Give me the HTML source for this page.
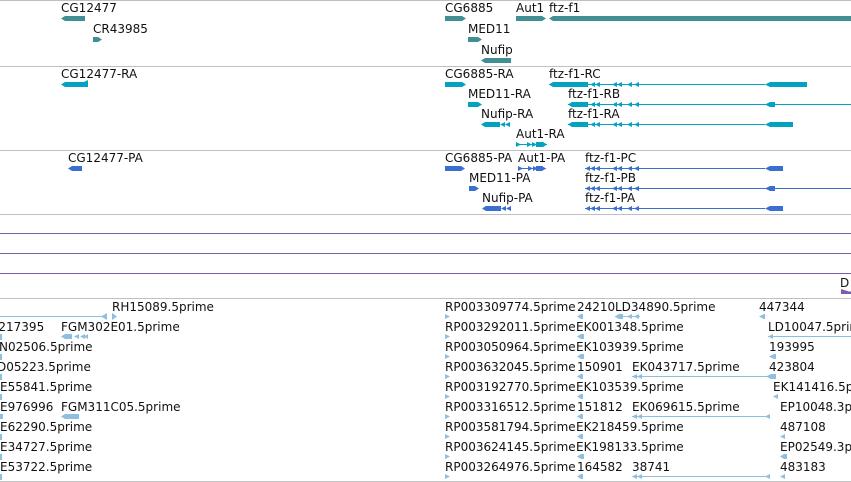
<!DOCTYPE html>
<html><head><meta charset="utf-8"><style>
html,body{margin:0;padding:0;background:#fff;}
body{width:851px;height:482px;position:relative;overflow:hidden;font-family:"DejaVu Sans","Liberation Sans",sans-serif;font-size:12px;color:#111;}
.t{position:absolute;line-height:14px;white-space:nowrap;}
svg{position:absolute;left:0;top:0;}
</style></head><body>
<svg width="851" height="482" xmlns="http://www.w3.org/2000/svg">
<g stroke="#c0c0c0" stroke-width="1">
<line x1="0" y1="0.5" x2="851" y2="0.5"/><line x1="0" y1="66.5" x2="851" y2="66.5"/>
<line x1="0" y1="150.5" x2="851" y2="150.5"/><line x1="0" y1="214.5" x2="851" y2="214.5"/>
<line x1="0" y1="298.5" x2="851" y2="298.5"/><line x1="0" y1="481.5" x2="851" y2="481.5"/>
</g>
<g stroke="#7a5fae" stroke-width="1">
<line x1="0" y1="233.5" x2="851" y2="233.5"/><line x1="0" y1="253.5" x2="851" y2="253.5"/><line x1="0" y1="273.5" x2="851" y2="273.5"/>
</g>
<polygon points="841,289 849,291.5 851,291.5 851,294 841,294" fill="#7a5fae"/>
<!-- genes -->
<g fill="#418f94">
<polygon points="61,18.5 65,16 85,16 85,21 65,21"/>
<polygon points="93,37 98,37 102,39.5 98,42 93,42"/>
<polygon points="445,16 462,16 466,18.5 462,21 445,21"/>
<polygon points="516,16 542,16 546,18.5 542,21 516,21"/>
<polygon points="549,18.5 553,16 851,16 851,21 553,21"/>
<polygon points="468,37 478,37 482,39.5 478,42 468,42"/>
<polygon points="481,60.5 485,58 511,58 511,63 485,63"/>
</g>
<!-- transcripts -->
<g fill="#02a2c1" stroke="#02a2c1">
<polygon stroke="none" points="61,84.5 65,82 84,82 88,80 88,87 84,87 65,87"/>
<polygon stroke="none" points="445,82 462,82 466,84.5 462,87 445,87"/>
<line x1="549" y1="84.5" x2="765" y2="84.5"/>
<polygon stroke="none" points="549,84.5 553,82 588,82 588,87 553,87"/>
<polygon stroke="none" points="765,84.5 770,82 807,82 807,87 770,87"/>
<line x1="568" y1="104.5" x2="851" y2="104.5"/>
<polygon stroke="none" points="568,104.5 572,102 588,102 588,107 572,107"/>
<polygon stroke="none" points="765,104.5 770,102 775,102 775,107 770,107"/>
<line x1="568" y1="124.5" x2="765" y2="124.5"/>
<polygon stroke="none" points="568,124.5 572,122 588,122 588,127 572,127"/>
<polygon stroke="none" points="765,124.5 770,122 793,122 793,127 770,127"/>
<polygon stroke="none" points="468,102 478,102 482,104.5 478,107 468,107"/>
<polygon stroke="none" points="481,124.5 485,122 500,122 500,127 485,127"/>
<line x1="516" y1="144.5" x2="547" y2="144.5"/>
<polygon stroke="none" points="516,142 521,144.5 516,147"/>
<polygon stroke="none" points="527,142 532,144.5 527,147"/>
<polygon stroke="none" points="532,142 537,144.5 532,147"/>
<polygon stroke="none" points="536,142 543,142 547,144.5 543,147 536,147"/>
</g>
<g fill="#02a2c1">
<polygon points="590,84.5 595,82 595,87"/><polygon points="595,84.5 600,82 600,87"/><polygon points="612,84.5 617,82 617,87"/><polygon points="617,84.5 622,82 622,87"/><polygon points="627,84.5 632,82 632,87"/><polygon points="634,84.5 639,82 639,87"/>
<polygon points="590,104.5 595,102 595,107"/><polygon points="595,104.5 600,102 600,107"/><polygon points="612,104.5 617,102 617,107"/><polygon points="617,104.5 622,102 622,107"/><polygon points="627,104.5 632,102 632,107"/><polygon points="634,104.5 639,102 639,107"/>
<polygon points="590,124.5 595,122 595,127"/><polygon points="595,124.5 600,122 600,127"/><polygon points="612,124.5 617,122 617,127"/><polygon points="617,124.5 622,122 622,127"/><polygon points="627,124.5 632,122 632,127"/><polygon points="634,124.5 639,122 639,127"/>
<polygon points="500,124.5 505,122 505,127"/><polygon points="505,124.5 510,122 510,127"/>
</g>
<!-- proteins -->
<g fill="#3a6fd0" stroke="#3a6fd0">
<polygon stroke="none" points="68,168.5 72,166 82,166 82,171 72,171"/>
<polygon stroke="none" points="445,166 461,166 465,168.5 461,171 445,171"/>
<line x1="518" y1="168.5" x2="546" y2="168.5"/>
<polygon stroke="none" points="518,166 523,168.5 518,171"/><polygon stroke="none" points="528,166 533,168.5 528,171"/><polygon stroke="none" points="533,166 538,168.5 533,171"/><polygon stroke="none" points="536,166 542,166 546,168.5 542,171 536,171"/>
<line x1="585" y1="168.5" x2="765" y2="168.5"/>
<polygon stroke="none" points="765,168.5 770,166 783,166 783,171 770,171"/>
<line x1="585" y1="188.5" x2="851" y2="188.5"/>
<polygon stroke="none" points="765,188.5 770,186 775,186 775,191 770,191"/>
<line x1="585" y1="208.5" x2="765" y2="208.5"/>
<polygon stroke="none" points="765,208.5 770,206 783,206 783,211 770,211"/>
<polygon stroke="none" points="469,186 475,186 479,188.5 475,191 469,191"/>
<polygon stroke="none" points="482,208.5 486,206 501,206 501,211 486,211"/>
</g>
<g fill="#3a6fd0">
<polygon points="585,168.5 590,166 590,171"/><polygon points="590,168.5 595,166 595,171"/><polygon points="595,168.5 600,166 600,171"/><polygon points="612,168.5 617,166 617,171"/><polygon points="617,168.5 622,166 622,171"/><polygon points="627,168.5 632,166 632,171"/><polygon points="634,168.5 639,166 639,171"/>
<polygon points="585,188.5 590,186 590,191"/><polygon points="590,188.5 595,186 595,191"/><polygon points="595,188.5 600,186 600,191"/><polygon points="612,188.5 617,186 617,191"/><polygon points="617,188.5 622,186 622,191"/><polygon points="627,188.5 632,186 632,191"/><polygon points="634,188.5 639,186 639,191"/>
<polygon points="585,208.5 590,206 590,211"/><polygon points="590,208.5 595,206 595,211"/><polygon points="595,208.5 600,206 600,211"/><polygon points="612,208.5 617,206 617,211"/><polygon points="617,208.5 622,206 622,211"/><polygon points="627,208.5 632,206 632,211"/><polygon points="634,208.5 639,206 639,211"/>
<polygon points="501,208.5 506,206 506,211"/><polygon points="506,208.5 511,206 511,211"/>
</g>
<!-- bottom ESTs -->
<g fill="#8dbfe0" stroke="#8dbfe0">
<line x1="0" y1="316.5" x2="105" y2="316.5"/>
<polygon stroke="none" points="101,316.5 107,313 107,320"/>
<polygon stroke="none" points="112,313 117,316.5 112,320"/>
<polygon stroke="none" points="61,336.5 65,334 72,334 72,339 65,339"/><polygon stroke="none" points="74,336.5 79,334 79,339"/><polygon stroke="none" points="80,336.5 85,334 85,339"/><polygon stroke="none" points="84,336.5 88,334 88,339"/>
<polygon stroke="none" points="61,416.5 65,414 79,414 79,419 65,419"/>
<rect stroke="none" x="0" y="334" width="2" height="6"/><rect stroke="none" x="0" y="354" width="2" height="6"/><rect stroke="none" x="0" y="374" width="2" height="6"/><rect stroke="none" x="0" y="394" width="2" height="6"/><rect stroke="none" x="0" y="414" width="3" height="5"/><rect stroke="none" x="0" y="434" width="2" height="6"/><rect stroke="none" x="0" y="454" width="2" height="6"/><rect stroke="none" x="0" y="474" width="2" height="6"/>
</g>
<g fill="#8dbfe0" stroke="#8dbfe0">
<polygon stroke="none" points="445,314 450,316.5 445,319"/><polygon stroke="none" points="445,334 450,336.5 445,339"/><polygon stroke="none" points="445,354 450,356.5 445,359"/><polygon stroke="none" points="445,374 450,376.5 445,379"/><polygon stroke="none" points="445,394 450,396.5 445,399"/><polygon stroke="none" points="445,414 450,416.5 445,419"/><polygon stroke="none" points="445,434 450,436.5 445,439"/><polygon stroke="none" points="445,454 450,456.5 445,459"/><polygon stroke="none" points="445,474 450,476.5 445,479"/>
<polygon stroke="none" points="577,316.5 581,314 583,314 583,319 581,319"/><polygon stroke="none" points="577,336.5 581,334 584,334 584,339 581,339"/><polygon stroke="none" points="577,356.5 581,354 584,354 584,359 581,359"/><polygon stroke="none" points="577,376.5 581,374 583,374 583,379 581,379"/><polygon stroke="none" points="577,396.5 581,394 583,394 583,399 581,399"/><polygon stroke="none" points="577,416.5 581,414 583,414 583,419 581,419"/><polygon stroke="none" points="577,436.5 581,434 583,434 583,439 581,439"/><polygon stroke="none" points="577,456.5 581,454 584,454 584,459 581,459"/><polygon stroke="none" points="577,476.5 581,474 583,474 583,479 581,479"/>
<line x1="615" y1="316.5" x2="640" y2="316.5"/>
<polygon stroke="none" points="615,316.5 619,314 623,314 623,319 619,319"/><polygon stroke="none" points="627,316.5 632,314 632,319"/><polygon stroke="none" points="634,316.5 639,314 639,319"/>
<polygon stroke="none" points="759,316.5 764,314 765,314 765,319 764,319"/>
<line x1="768" y1="336.5" x2="851" y2="336.5"/><polygon stroke="none" points="768,336.5 773,334 773,339"/>
<polygon stroke="none" points="769,356.5 774,354 776,354 776,359 774,359"/>
<line x1="632" y1="376.5" x2="770" y2="376.5"/>
<polygon stroke="none" points="632,376.5 637,374 637,379"/><polygon stroke="none" points="637,376.5 642,374 642,379"/><polygon stroke="none" points="766,376.5 771,374 776,374 776,379 771,379"/>
<polygon stroke="none" points="773,396.5 778,394 778,399"/>
<line x1="632" y1="416.5" x2="770" y2="416.5"/>
<polygon stroke="none" points="632,416.5 637,414 637,419"/><polygon stroke="none" points="637,416.5 642,414 642,419"/><polygon stroke="none" points="765,416.5 770,414 770,419"/>
<polygon stroke="none" points="780,436.5 785,434 785,439"/>
<polygon stroke="none" points="780,456.5 784,454 787,454 787,459 784,459"/>
<line x1="632" y1="476.5" x2="770" y2="476.5"/>
<polygon stroke="none" points="632,476.5 637,474 637,479"/><polygon stroke="none" points="637,476.5 642,474 642,479"/><polygon stroke="none" points="765,476.5 770,474 770,479"/>
<polygon stroke="none" points="780,476.5 785,474 785,479"/>
</g>
</svg>

<div class="t" style="left:61px;top:1px">CG12477</div>
<div class="t" style="left:93px;top:22px">CR43985</div>
<div class="t" style="left:445px;top:1px">CG6885</div>
<div class="t" style="left:516px;top:1px">Aut1</div>
<div class="t" style="left:549px;top:1px">ftz-f1</div>
<div class="t" style="left:468px;top:22px">MED11</div>
<div class="t" style="left:481px;top:43px">Nufip</div>

<div class="t" style="left:61px;top:67px">CG12477-RA</div>
<div class="t" style="left:445px;top:67px">CG6885-RA</div>
<div class="t" style="left:549px;top:67px">ftz-f1-RC</div>
<div class="t" style="left:468px;top:87px">MED11-RA</div>
<div class="t" style="left:568px;top:87px">ftz-f1-RB</div>
<div class="t" style="left:481px;top:107px">Nufip-RA</div>
<div class="t" style="left:568px;top:107px">ftz-f1-RA</div>
<div class="t" style="left:516px;top:127px">Aut1-RA</div>

<div class="t" style="left:68px;top:151px">CG12477-PA</div>
<div class="t" style="left:445px;top:151px">CG6885-PA</div>
<div class="t" style="left:518px;top:151px">Aut1-PA</div>
<div class="t" style="left:585px;top:151px">ftz-f1-PC</div>
<div class="t" style="left:469px;top:171px">MED11-PA</div>
<div class="t" style="left:585px;top:171px">ftz-f1-PB</div>
<div class="t" style="left:482px;top:191px">Nufip-PA</div>
<div class="t" style="left:585px;top:191px">ftz-f1-PA</div>

<div class="t" style="left:840px;top:276px">D</div>

<div class="t" style="left:112px;top:300px">RH15089.5prime</div>
<div class="t" style="left:-4px;top:320px">&#8239;217395</div>
<div class="t" style="left:61px;top:320px">FGM302E01.5prime</div>
<div class="t" style="left:-1px;top:340px">N02506.5prime</div>
<div class="t" style="left:-3px;top:360px">D05223.5prime</div>
<div class="t" style="left:0px;top:380px">E55841.5prime</div>
<div class="t" style="left:0px;top:400px">E976996</div>
<div class="t" style="left:61px;top:400px">FGM311C05.5prime</div>
<div class="t" style="left:0px;top:420px">E62290.5prime</div>
<div class="t" style="left:0px;top:440px">E34727.5prime</div>
<div class="t" style="left:0px;top:460px">E53722.5prime</div>

<div class="t" style="left:445px;top:300px">RP003309774.5prime</div>
<div class="t" style="left:445px;top:320px">RP003292011.5prime</div>
<div class="t" style="left:445px;top:340px">RP003050964.5prime</div>
<div class="t" style="left:445px;top:360px">RP003632045.5prime</div>
<div class="t" style="left:445px;top:380px">RP003192770.5prime</div>
<div class="t" style="left:445px;top:400px">RP003316512.5prime</div>
<div class="t" style="left:445px;top:420px">RP003581794.5prime</div>
<div class="t" style="left:445px;top:440px">RP003624145.5prime</div>
<div class="t" style="left:445px;top:460px">RP003264976.5prime</div>

<div class="t" style="left:577px;top:300px">24210</div>
<div class="t" style="left:615px;top:300px">LD34890.5prime</div>
<div class="t" style="left:576px;top:320px">EK001348.5prime</div>
<div class="t" style="left:576px;top:340px">EK103939.5prime</div>
<div class="t" style="left:577px;top:360px">150901</div>
<div class="t" style="left:632px;top:360px">EK043717.5prime</div>
<div class="t" style="left:576px;top:380px">EK103539.5prime</div>
<div class="t" style="left:577px;top:400px">151812</div>
<div class="t" style="left:632px;top:400px">EK069615.5prime</div>
<div class="t" style="left:576px;top:420px">EK218459.5prime</div>
<div class="t" style="left:576px;top:440px">EK198133.5prime</div>
<div class="t" style="left:577px;top:460px">164582</div>
<div class="t" style="left:632px;top:460px">38741</div>

<div class="t" style="left:759px;top:300px">447344</div>
<div class="t" style="left:768px;top:320px">LD10047.5prime</div>
<div class="t" style="left:769px;top:340px">193995</div>
<div class="t" style="left:769px;top:360px">423804</div>
<div class="t" style="left:773px;top:380px">EK141416.5prime</div>
<div class="t" style="left:780px;top:400px">EP10048.3prime</div>
<div class="t" style="left:780px;top:420px">487108</div>
<div class="t" style="left:780px;top:440px">EP02549.3prime</div>
<div class="t" style="left:780px;top:460px">483183</div>
</body></html>
